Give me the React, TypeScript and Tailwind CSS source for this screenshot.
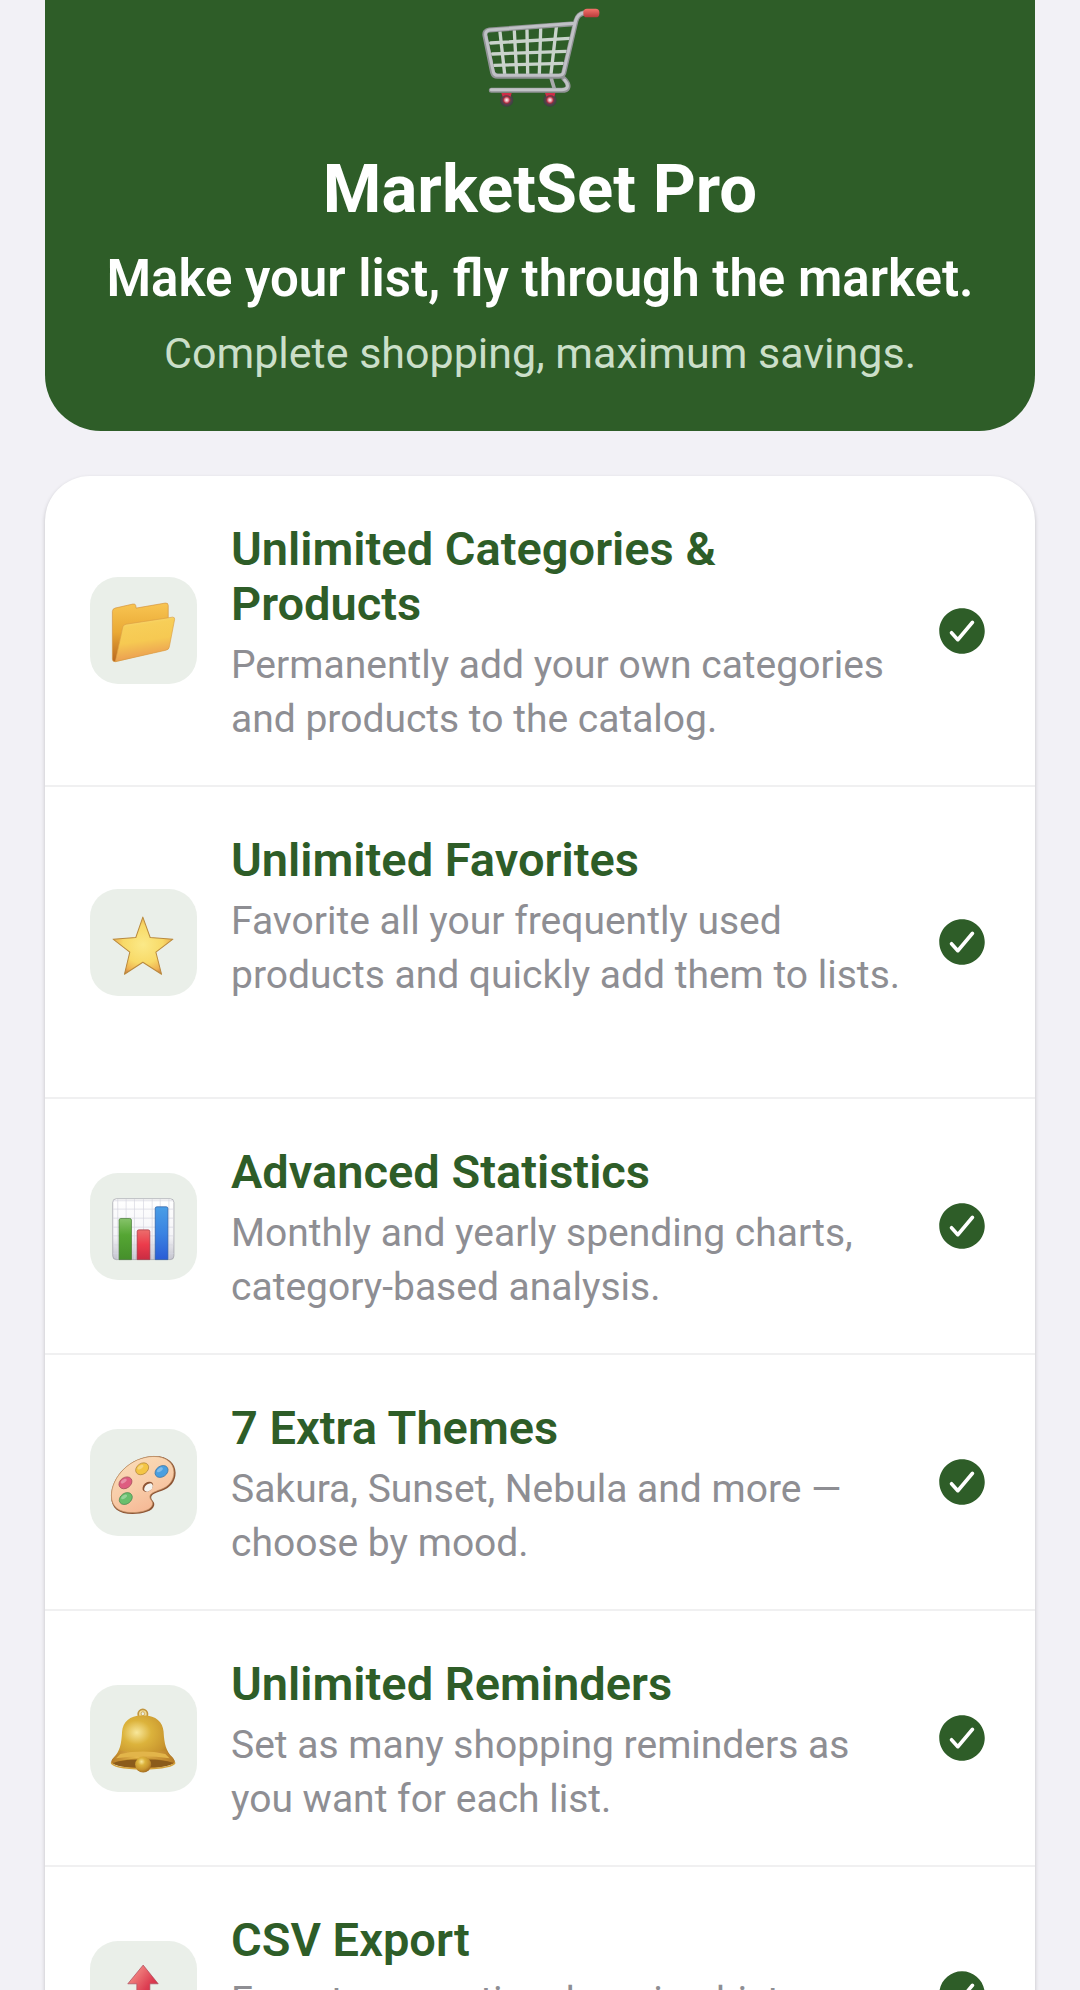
import type { ReactNode } from "react";
import { IoCheckmarkCircle } from "react-icons/io5";
import clsx from "clsx";

type Feature = {
  id: string;
  title: string;
  description: string;
  icon: ReactNode;
  tall?: boolean;
};

function CartIcon() {
  return (
    <svg viewBox="0 0 480 336" className="h-[112px] w-[160px]" aria-hidden="true">
      <defs>
        <radialGradient id="wheel">
          <stop offset="0" stopColor="#fff" />
          <stop offset="0.3" stopColor="#e58a96" />
          <stop offset="0.5" stopColor="#a8283c" />
          <stop offset="0.65" stopColor="#55444c" />
          <stop offset="1" stopColor="#3c4040" />
        </radialGradient>
        <linearGradient id="handle" x1="0" y1="0" x2="0" y2="1">
          <stop offset="0" stopColor="#f5736b" />
          <stop offset="1" stopColor="#b83a3a" />
        </linearGradient>
      </defs>
      <g fill="none" stroke="#c9d3cb" strokeWidth="10" strokeLinecap="round">
        <path d="M120 96 L134 222 M163 93 L170 222 M201 90 L203 222 M242 87 L238 222 M289 82 L273 222" />
        <path d="M92 129 L328 115 M97 162 L318 154 M103 196 L308 190" />
      </g>
      <g fill="none" strokeLinecap="round" strokeLinejoin="round">
        <path d="M274 236 L283 266" stroke="#a9aaac" strokeWidth="11" />
        <path d="M312 236 Q328 252 323 264 Q320 271 305 271 L94 271" stroke="#919396" strokeWidth="15" />
        <path d="M314 240 Q326 254 321 263 Q317 269 305 269 L94 269" stroke="#c2c3c7" strokeWidth="9" />
        <path d="M372 39 Q354 42 348 62 L311 220 Q308 229 296 229 L113 229 Q101 229 98 218 L75 107 Q72 92 88 90 L344 71" stroke="#919396" strokeWidth="15" />
        <path d="M372 38 Q353 41 347 62 L310 219 Q307 226 296 226 L113 226 Q103 226 100 216 L77 106 Q75 93 89 90 L344 70" stroke="#c0c1c6" strokeWidth="9" />
      </g>
      <circle cx="140" cy="300" r="20" fill="url(#wheel)" />
      <circle cx="270" cy="300" r="20" fill="url(#wheel)" />
      <path d="M124 279 h31 l-3 11 q-12 -8 -24 0z M255 279 h31 l-3 11 q-12 -8 -24 0z" fill="#cf2d48" />
      <rect x="370" y="26" width="48" height="26" rx="11" fill="url(#handle)" />
    </svg>
  );
}

function FolderIcon() {
  return (
    <svg viewBox="30 25 320 320" className="size-full" aria-hidden="true">
      <defs>
        <linearGradient id="folderBack" x1="0" y1="0" x2="0" y2="1">
          <stop offset="0" stopColor="#f8c552" />
          <stop offset="0.5" stopColor="#eaa935" />
          <stop offset="1" stopColor="#b96820" />
        </linearGradient>
        <linearGradient id="folderFront" x1="0" y1="0" x2="0.2" y2="1">
          <stop offset="0" stopColor="#fbe48c" />
          <stop offset="0.25" stopColor="#f7ce58" />
          <stop offset="0.6" stopColor="#f6c952" />
          <stop offset="1" stopColor="#eb9c52" />
        </linearGradient>
      </defs>
      <path
        d="M97 128 Q97 120 105 118 L158 106 Q166 104 167 111 L168 118 L255 103 Q264 102 264 110 L264 240 L106 278 Q97 279 97 271z"
        fill="url(#folderBack)"
        stroke="#d39542"
        strokeWidth="2"
      />
      <path
        d="M128 174 Q130 167 139 166 L277 145 Q284 145 283 152 L267 235 Q265 242 257 244 L106 278z"
        fill="url(#folderFront)"
        stroke="#dda047"
        strokeWidth="2"
      />
    </svg>
  );
}

function StarIcon() {
  return (
    <svg viewBox="30 26 320 320" className="size-full" aria-hidden="true">
      <defs>
        <radialGradient id="star" cx="0.5" cy="0.48" r="0.6">
          <stop offset="0" stopColor="#fbe988" />
          <stop offset="0.55" stopColor="#f8da68" />
          <stop offset="0.82" stopColor="#eeb050" />
          <stop offset="1" stopColor="#bf6c40" />
        </radialGradient>
      </defs>
      <path
        d="M188 110 L210 171 L278 176 L227 215 L244 281 L188 245 L133 281 L149 215 L99 176 L167 171z"
        fill="url(#star)"
        stroke="#b98a3e"
        strokeWidth="3"
        strokeLinejoin="round"
      />
    </svg>
  );
}

function ChartIcon() {
  return (
    <svg viewBox="30 25 320 320" className="size-full" aria-hidden="true">
      <defs>
        <linearGradient id="chartPaper" x1="0" y1="0" x2="0" y2="1">
          <stop offset="0" stopColor="#fff" />
          <stop offset="0.6" stopColor="#f5f5f8" />
          <stop offset="1" stopColor="#c4c4ce" />
        </linearGradient>
        <linearGradient id="barGreen" x1="0" y1="0" x2="0" y2="1">
          <stop offset="0" stopColor="#86c36a" />
          <stop offset="0.4" stopColor="#55a633" />
          <stop offset="1" stopColor="#458f2b" />
        </linearGradient>
        <linearGradient id="barRed" x1="0" y1="0" x2="0" y2="1">
          <stop offset="0" stopColor="#ec6e6c" />
          <stop offset="0.5" stopColor="#ec3b4b" />
          <stop offset="1" stopColor="#c92c43" />
        </linearGradient>
        <linearGradient id="barBlue" x1="0" y1="0" x2="0" y2="1">
          <stop offset="0" stopColor="#4a9ee6" />
          <stop offset="0.5" stopColor="#3a83e2" />
          <stop offset="1" stopColor="#2a5cd6" />
        </linearGradient>
      </defs>
      <rect x="98" y="102" width="183" height="182" rx="11" fill="url(#chartPaper)" stroke="#9a9aa3" strokeWidth="2" />
      <path
        d="M113 103 V283 M138 103 V283 M163 103 V283 M190 103 V283 M216 103 V283 M240 103 V283 M266 103 V283 M99 108 H280 M99 133 H280 M99 160 H280 M99 187 H280 M99 213 H280 M99 240 H280 M99 266 H280"
        stroke="#d5d5df"
        strokeWidth="2"
      />
      <path d="M117 284 V166 q0 -5 5 -5 h27 q5 0 5 5 V284z" fill="url(#barGreen)" stroke="#40752f" strokeWidth="2" />
      <path d="M171 284 V200 q0 -5 5 -5 h28 q5 0 5 5 V284z" fill="url(#barRed)" stroke="#a13340" strokeWidth="2" />
      <path d="M225 284 V131 q0 -5 5 -5 h28 q5 0 5 5 V284z" fill="url(#barBlue)" stroke="#27579f" strokeWidth="2" />
    </svg>
  );
}

function PaletteIcon() {
  return (
    <svg viewBox="30 27 320 320" className="size-full" aria-hidden="true">
      <defs>
        <linearGradient id="palette" x1="0" y1="0" x2="0.5" y2="1">
          <stop offset="0" stopColor="#fbdfba" />
          <stop offset="0.6" stopColor="#f8cda9" />
          <stop offset="1" stopColor="#f6b996" />
        </linearGradient>
      </defs>
      <path
        d="M93 228 C94 170 150 109 223 108 C264 108 286 131 286 158 C286 184 270 203 245 212 C226 219 213 223 213 232 C213 241 224 244 222 255 C219 273 187 281 157 281 C116 281 93 264 93 228z"
        fill="#8d5434"
      />
      <path
        d="M94 226 C95 170 150 110 221 109 C260 109 281 131 281 156 C281 180 266 199 241 208 C222 215 209 220 209 230 C209 239 219 242 217 252 C214 269 185 277 156 277 C118 277 94 261 94 226z"
        fill="url(#palette)"
        stroke="#c19468"
        strokeWidth="2"
      />
      <ellipse cx="203" cy="200" rx="18" ry="13" transform="rotate(-42 203 200)" fill="#8d5434" />
      <ellipse cx="205" cy="202" rx="15" ry="10" transform="rotate(-42 205 202)" fill="#f5f4ef" />
      <g strokeWidth="2">
        <ellipse cx="186" cy="146" rx="21" ry="16" transform="rotate(-35 186 146)" fill="#f4c544" stroke="#ae8238" />
        <ellipse cx="244" cy="154" rx="21" ry="16" transform="rotate(-35 244 154)" fill="#4a9fe0" stroke="#39719d" />
        <ellipse cx="136" cy="188" rx="21" ry="16" transform="rotate(-35 136 188)" fill="#de5d80" stroke="#9f4a56" />
        <ellipse cx="137" cy="235" rx="21" ry="16" transform="rotate(-35 137 235)" fill="#68bf6d" stroke="#498650" />
      </g>
      <g fill="#fff" opacity="0.3">
        <ellipse cx="181" cy="141" rx="10" ry="5" transform="rotate(-35 181 141)" />
        <ellipse cx="239" cy="149" rx="10" ry="5" transform="rotate(-35 239 149)" />
        <ellipse cx="131" cy="183" rx="10" ry="5" transform="rotate(-35 131 183)" />
        <ellipse cx="132" cy="230" rx="10" ry="5" transform="rotate(-35 132 230)" />
      </g>
    </svg>
  );
}

function BellIcon() {
  return (
    <svg viewBox="30 33 320 320" className="size-full" aria-hidden="true">
      <defs>
        <radialGradient id="bell" cx="0.4" cy="0.32" r="0.75">
          <stop offset="0" stopColor="#f8e79a" />
          <stop offset="0.3" stopColor="#dcb33c" />
          <stop offset="0.65" stopColor="#c8952e" />
          <stop offset="1" stopColor="#9a601c" />
        </radialGradient>
        <linearGradient id="bellRim" x1="0" y1="0" x2="1" y2="0">
          <stop offset="0" stopColor="#b67b26" />
          <stop offset="0.4" stopColor="#e6b94c" />
          <stop offset="1" stopColor="#b67b26" />
        </linearGradient>
      </defs>
      <circle cx="188" cy="120" r="14" fill="#f0dc98" stroke="#c2953e" strokeWidth="5" />
      <ellipse cx="188" cy="119" rx="5" ry="6" fill="#eaefe9" stroke="#c2953e" strokeWidth="2" />
      <path
        d="M188 124 C224 122 248 142 250 172 C252 210 258 231 276 249 Q285 258 284 268 Q236 284 188 284 Q140 284 94 268 Q92 258 102 249 C119 231 124 210 126 172 C128 142 152 122 188 124z"
        fill="url(#bell)"
      />
      <path d="M119 228 Q188 244 257 228 Q264 241 276 249 Q285 258 283 266 Q236 252 188 252 Q140 252 94 266 Q93 258 102 249 Q112 241 119 228z" fill="url(#bellRim)" />
      <ellipse cx="188" cy="268" rx="86" ry="12" fill="#8b5b1b" />
      <path d="M94 265 Q98 282 188 284 Q279 282 284 265" fill="none" stroke="#d4a23c" strokeWidth="5" />
      <circle cx="189" cy="271" r="24" fill="url(#bell)" />
      <path d="M121 239 Q188 225 255 239 L268 252 Q188 240 108 252z" fill="#e2b54a" />
    </svg>
  );
}

function OutboxIcon() {
  return (
    <svg viewBox="0 0 320 320" className="size-full" aria-hidden="true">
      <defs>
        <linearGradient id="outArrow" x1="0" y1="0" x2="1" y2="1">
          <stop offset="0.2" stopColor="#f18480" />
          <stop offset="0.6" stopColor="#dc3b50" />
          <stop offset="1" stopColor="#b92b41" />
        </linearGradient>
      </defs>
      <path d="M68 200 L92 172 H226 L250 200 V246 Q250 254 242 254 H76 Q68 254 68 246z" fill="#c9ccd3" stroke="#9296a0" strokeWidth="2" />
      <path d="M68 202 H116 L126 220 H192 L202 202 H250 V246 Q250 254 242 254 H76 Q68 254 68 246z" fill="#e3e5ea" />
      <path d="M159 72 L204 128 H179 V192 H140 V128 H113z" fill="url(#outArrow)" stroke="#a94a5b" strokeWidth="2" strokeLinejoin="round" />
    </svg>
  );
}

const features: Feature[] = [
  {
    id: "catalog",
    title: "Unlimited Categories & Products",
    description: "Permanently add your own categories and products to the catalog.",
    icon: <FolderIcon />,
  },
  {
    id: "favorites",
    title: "Unlimited Favorites",
    description: "Favorite all your frequently used products and quickly add them to lists.",
    icon: <StarIcon />,
    tall: true,
  },
  {
    id: "statistics",
    title: "Advanced Statistics",
    description: "Monthly and yearly spending charts, category-based analysis.",
    icon: <ChartIcon />,
  },
  {
    id: "themes",
    title: "7 Extra Themes",
    description: "Sakura, Sunset, Nebula and more — choose by mood.",
    icon: <PaletteIcon />,
  },
  {
    id: "reminders",
    title: "Unlimited Reminders",
    description: "Set as many shopping reminders as you want for each list.",
    icon: <BellIcon />,
  },
  {
    id: "export",
    title: "CSV Export",
    description: "Export your entire shopping history as a CSV file.",
    icon: <OutboxIcon />,
  },
];

function FeatureRow({ feature }: { feature: Feature }) {
  return (
    <li className="flex items-center border-b-2 border-[#f0f0f1] px-[45px] last:border-b-0">
      <div className="size-[107px] shrink-0 overflow-hidden rounded-[28px] bg-[#eaefe9]">
        {feature.icon}
      </div>
      <div className="mr-[28px] ml-[34px] min-w-0 flex-1 pt-[45px] pb-[39px]">
        <h2 className="text-[47px] leading-[55px] font-semibold text-[#2e5d28]">{feature.title}</h2>
        <p
          className={clsx(
            "mt-[7px] text-[39px] leading-[54px] text-[#8e8e93]",
            feature.tall && "min-h-[164px]",
          )}
        >
          {feature.description}
        </p>
      </div>
      <IoCheckmarkCircle className="size-[56px] shrink-0 text-[#2e5d28]" aria-label="Included" />
    </li>
  );
}

export default function App() {
  return (
    <main className="flex h-screen flex-col gap-[45px] overflow-hidden bg-[#f2f1f6] px-[45px] font-[Roboto,sans-serif]">
      <header className="flex shrink-0 flex-col items-center rounded-b-[56px] bg-[#2e5d28] pb-[53px] text-center">
        <CartIcon />
        <h1 className="mt-[38px] text-[67px] leading-[79px] font-bold text-white">MarketSet Pro</h1>
        <p className="mt-[20px] text-[51px] leading-[60px] font-semibold text-white">
          Make your list, fly through the market.
        </p>
        <p className="mt-[19px] text-[43px] leading-[50px] text-[#cbdfc9]">
          Complete shopping, maximum savings.
        </p>
      </header>
      <ul className="shrink-0 overflow-hidden rounded-[45px] bg-white shadow-[0_2px_4px_rgba(0,0,0,0.2)]">
        {features.map((feature) => (
          <FeatureRow key={feature.id} feature={feature} />
        ))}
      </ul>
    </main>
  );
}
